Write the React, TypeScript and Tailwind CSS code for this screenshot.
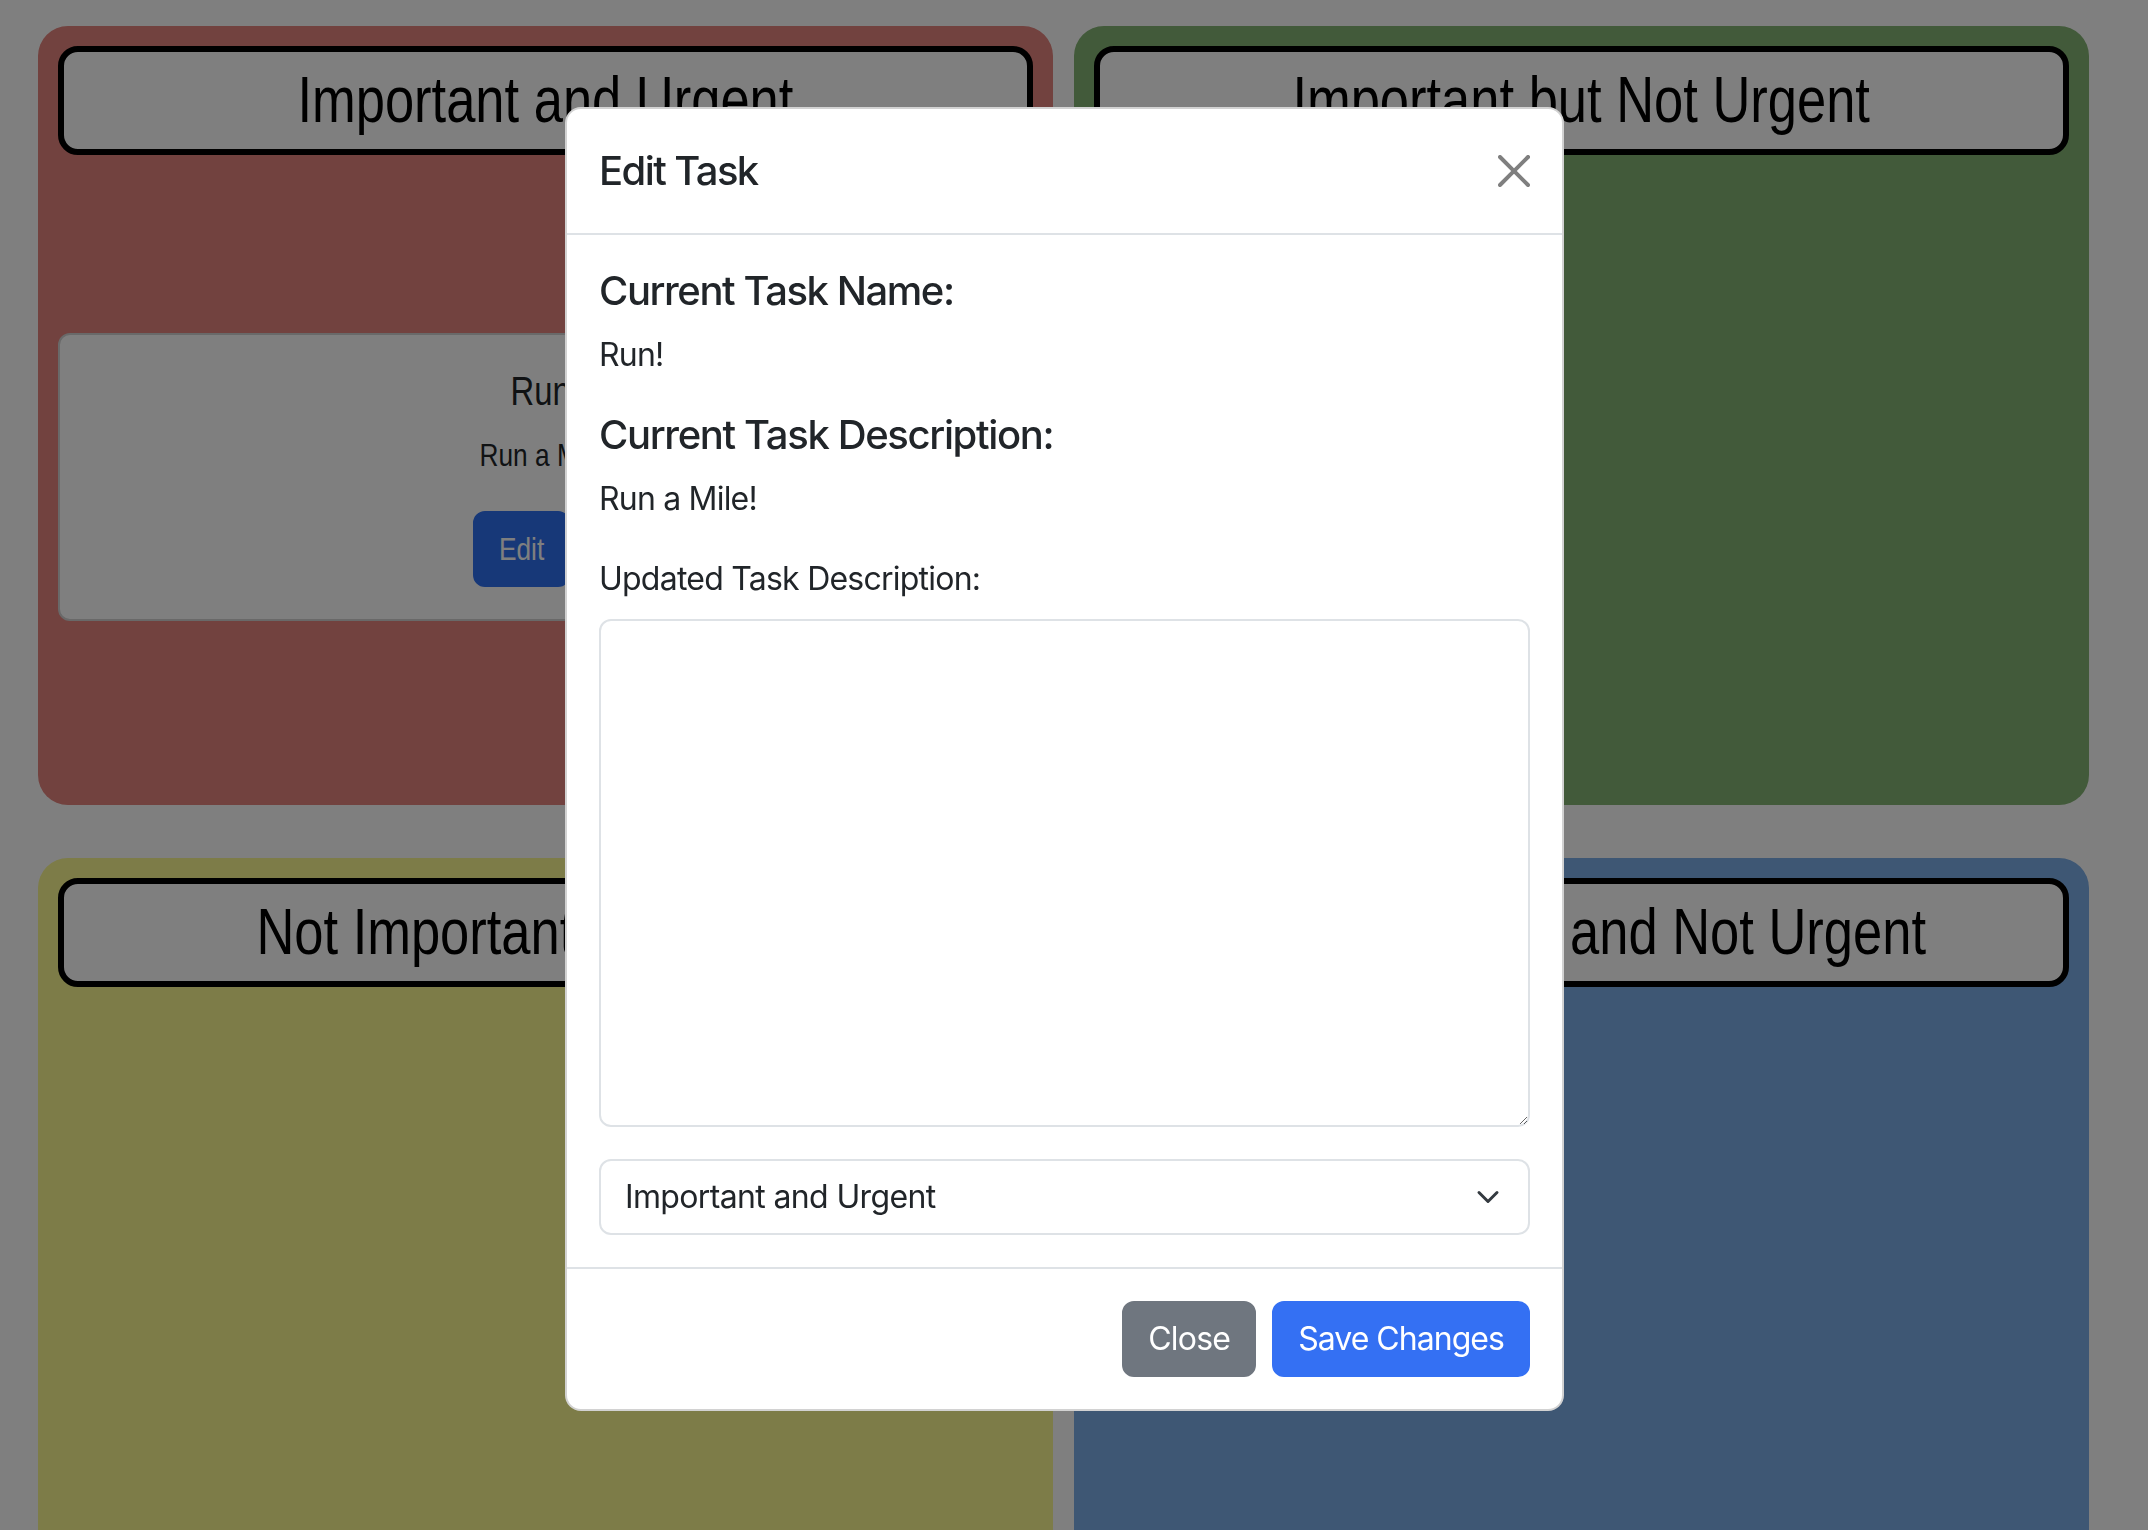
import React from "react";

type QuadrantProps = {
  title: string;
  bg: string;
  children?: React.ReactNode;
};

function Narrow({ children }: { children: React.ReactNode }) {
  return <span className="inline-block scale-x-[0.82] whitespace-nowrap">{children}</span>;
}

function Quadrant({ title, bg, children }: QuadrantProps) {
  return (
    <section className={`flex h-[779px] flex-col rounded-[30px] px-5 pt-5 pb-[5px] ${bg}`}>
      <h1 className="rounded-[20px] border-[6px] border-black bg-white py-[10px] text-center text-[64px] leading-[1.2] font-normal text-black">
        <Narrow>{title}</Narrow>
      </h1>
      <div className="flex flex-1 items-center">{children}</div>
    </section>
  );
}

function TaskCard() {
  return (
    <div className="w-full rounded-[12px] border-2 border-[#d2d2d2] bg-white p-8 text-center text-[#212529]">
      <h5 className="mb-4 text-[40px] leading-[1.2] font-normal">
        <Narrow>Run!</Narrow>
      </h5>
      <p className="mb-8 text-[32px] leading-[1.5]">
        <Narrow>Run a Mile!</Narrow>
      </p>
      <div className="flex pl-[381px]">
        <button className="rounded-[12px] border-2 border-[#2e70f0] bg-[#2e70f0] px-[19px] py-3 text-[32px] leading-[1.5] text-white">
          <Narrow>Edit</Narrow>
        </button>
      </div>
    </div>
  );
}

function CloseIcon() {
  return (
    <svg width="32" height="32" viewBox="0 0 16 16" aria-hidden="true">
      <path
        fill="#000"
        fillOpacity="0.5"
        d="M.293.293a1 1 0 0 1 1.414 0L8 6.586 14.293.293a1 1 0 1 1 1.414 1.414L9.414 8l6.293 6.293a1 1 0 0 1-1.414 1.414L8 9.414l-6.293 6.293a1 1 0 0 1-1.414-1.414L6.586 8 .293 1.707a1 1 0 0 1 0-1.414z"
      />
    </svg>
  );
}

function Chevron() {
  return (
    <svg width="24" height="24" viewBox="0 0 16 16" aria-hidden="true" fill="none">
      <path d="m2 5 6 6 6-6" stroke="#343a40" strokeWidth="2" strokeLinecap="round" strokeLinejoin="round" />
    </svg>
  );
}

export default function App() {
  return (
    <div className="relative h-[1530px] overflow-hidden bg-white font-['Liberation_Sans','Arial',sans-serif]">
      <main className="grid grid-cols-[1015px_1015px] gap-x-[21px] gap-y-[53px] pt-[26px] pl-[38px]">
        <Quadrant title="Important and Urgent" bg="bg-[#e4847e]">
          <TaskCard />
        </Quadrant>
        <Quadrant title="Important but Not Urgent" bg="bg-[#84b474]" />
        <Quadrant title="Not Important but Urgent" bg="bg-[#faf890]" />
        <Quadrant title="Not Important and Not Urgent" bg="bg-[#7caee8]" />
      </main>

      <div className="fixed inset-0 bg-black/50" />

      <div className="fixed top-[107px] left-[565px] w-[999px] rounded-[16px] border-2 border-black/[.175] bg-white font-['Inter','Noto_Sans',sans-serif] text-[#212529]">
        <div className="flex items-center justify-between border-b-2 border-[#dee2e6] py-8 pr-8 pl-[32px]">
          <h5 className="text-[40px] leading-[1.5] font-medium tracking-[-0.04em]">Edit Task</h5>
          <button className="flex h-8 w-8 items-center justify-center" aria-label="Close">
            <CloseIcon />
          </button>
        </div>

        <div className="p-8">
          <h5 className="mb-4 text-[40px] leading-[1.2] font-medium tracking-[-0.036em]">Current Task Name:</h5>
          <p className="mb-8 text-[32px] leading-[1.5] tracking-[-0.025em]">Run!</p>
          <h5 className="mb-4 text-[40px] leading-[1.2] font-medium tracking-[-0.034em]">Current Task Description:</h5>
          <p className="mb-8 text-[32px] leading-[1.5] tracking-[-0.025em]">Run a Mile!</p>
          <label className="mb-4 block text-[32px] leading-[1.5] tracking-[-0.024em]">Updated Task Description:</label>
          <textarea
            rows={10}
            className="mb-8 block h-[508px] w-full rounded-[12px] border-2 border-[#dee2e6] px-6 py-3 text-[32px] leading-[1.5] outline-none"
          />
          <div className="relative">
            <select
              defaultValue="iu"
              className="block h-[76px] w-full appearance-none rounded-[12px] border-2 border-[#dee2e6] bg-white pr-20 pl-6 text-[32px] leading-[1.5] tracking-[-0.02em] text-[#212529] outline-none"
            >
              <option value="iu">Important and Urgent</option>
              <option value="inu">Important but Not Urgent</option>
              <option value="niu">Not Important but Urgent</option>
              <option value="ninu">Not Important and Not Urgent</option>
            </select>
            <span className="pointer-events-none absolute top-1/2 right-[30px] flex -translate-y-1/2">
              <Chevron />
            </span>
          </div>
        </div>

        <div className="flex justify-end gap-4 border-t-2 border-[#dee2e6] p-8">
          <button className="rounded-[12px] border-2 border-[#6f767f] bg-[#6f767f] px-6 py-3 text-[32px] leading-[1.5] tracking-[-0.025em] text-white">
            Close
          </button>
          <button className="rounded-[12px] border-2 border-[#3470f3] bg-[#3470f3] px-6 py-3 text-[32px] leading-[1.5] tracking-[-0.03em] text-white">
            Save Changes
          </button>
        </div>
      </div>
    </div>
  );
}
